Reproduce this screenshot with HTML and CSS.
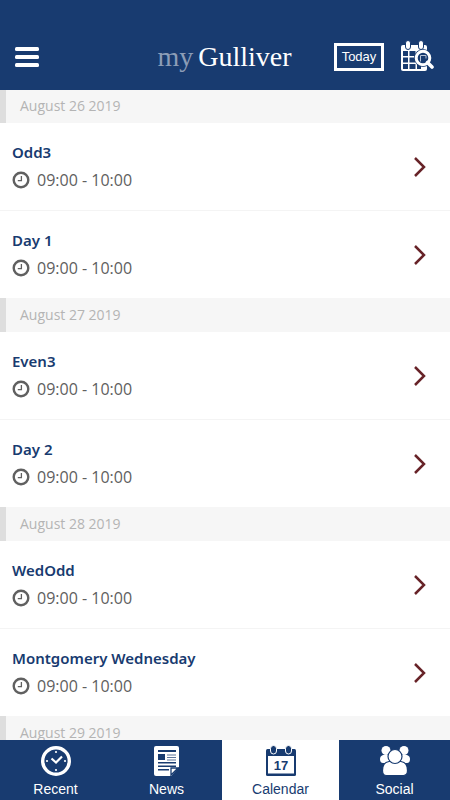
FILE: index.html
```html
<!DOCTYPE html>
<html lang="en">
<head>
<meta charset="utf-8">
<meta name="viewport" content="width=device-width, initial-scale=1">
<title>myGulliver</title>
<link rel="stylesheet" href="styles.css">
</head>
<body>
<svg class="sprite" aria-hidden="true">
  <symbol id="clock" viewBox="0 0 18 18">
    <circle cx="9" cy="9" r="7.3" fill="none" stroke="currentColor" stroke-width="2.4"/>
    <path d="M9.4 5v4.700H5.800" fill="none" stroke="currentColor" stroke-width="1.300"/>
  </symbol>
  <symbol id="chevron" viewBox="0 0 14 22">
    <path d="M2 3l9 9-9 9" fill="none" stroke="currentColor" stroke-width="2.500"/>
  </symbol>
</svg>
<div class="app">
  <header class="topbar">
    <button class="icon-button" aria-label="Menu">
      <svg width="24" height="22" viewBox="0 0 24 22" fill="#fff"><rect y="1" width="24" height="4" rx="1.5"/><rect y="9" width="24" height="4" rx="1.5"/><rect y="17" width="24" height="4" rx="1.5"/></svg>
    </button>
    <h1 class="logo"><span class="logo-my">my</span><span>Gulliver</span></h1>
    <div class="actions">
      <button class="today">Today</button>
      <button class="icon-button" aria-label="Search calendar">
        <svg width="34" height="34" viewBox="0 0 34 34">
          <path d="M1 7Q1 5 3 5H25Q27 5 27 7V29Q27 31 25 31H3Q1 31 1 29Z" fill="#fff"/>
          <g fill="#183b70"><path d="M3 11h5v5H3zM9.500 11h6v5h-6zM17 11h8v5h-8zM3 17.500h5v5H3zM9.500 17.500h6v5h-6zM3 24h5v5H3zM9.500 24h6v5h-6zM17 24h4v5h-4z"/></g>
          <g fill="#fff" stroke="#183b70"><rect x="5.500" y=".5" width="5" height="9" rx="2.500"/><rect x="18.500" y=".5" width="5" height="9" rx="2.500"/></g>
          <circle cx="23" cy="18" r="9" fill="#183b70"/>
          <circle cx="23" cy="18" r="6.800" fill="#183b70" stroke="#fff" stroke-width="3"/>
          <path d="M20.500 21.500v-6h5.500v3" fill="none" stroke="#b8c4d6"/>
          <path d="M27.500 22.500l4.500 4.500" stroke="#fff" stroke-width="3.600" stroke-linecap="round"/>
        </svg>
      </button>
    </div>
  </header>

  <main class="agenda">
    <section>
      <h2 class="date">August 26 2019</h2>
      <a class="event" href="#"><span class="details"><strong>Odd3</strong><span class="time"><svg><use href="#clock"/></svg>09:00 - 10:00</span></span><svg class="chevron"><use href="#chevron"/></svg></a>
      <a class="event" href="#"><span class="details"><strong>Day 1</strong><span class="time"><svg><use href="#clock"/></svg>09:00 - 10:00</span></span><svg class="chevron"><use href="#chevron"/></svg></a>
    </section>
    <section>
      <h2 class="date">August 27 2019</h2>
      <a class="event" href="#"><span class="details"><strong>Even3</strong><span class="time"><svg><use href="#clock"/></svg>09:00 - 10:00</span></span><svg class="chevron"><use href="#chevron"/></svg></a>
      <a class="event" href="#"><span class="details"><strong>Day 2</strong><span class="time"><svg><use href="#clock"/></svg>09:00 - 10:00</span></span><svg class="chevron"><use href="#chevron"/></svg></a>
    </section>
    <section>
      <h2 class="date">August 28 2019</h2>
      <a class="event" href="#"><span class="details"><strong>WedOdd</strong><span class="time"><svg><use href="#clock"/></svg>09:00 - 10:00</span></span><svg class="chevron"><use href="#chevron"/></svg></a>
      <a class="event" href="#"><span class="details"><strong>Montgomery Wednesday</strong><span class="time"><svg><use href="#clock"/></svg>09:00 - 10:00</span></span><svg class="chevron"><use href="#chevron"/></svg></a>
    </section>
    <section>
      <h2 class="date">August 29 2019</h2>
    </section>
  </main>

  <nav class="tabs">
    <a class="tab" href="#">
      <svg width="32" height="32" viewBox="0 0 32 32"><circle cx="16" cy="16" r="13.300" fill="none" stroke="#fff" stroke-width="3.400"/><path d="M11.500 13.500l4.500 4 6-6" fill="none" stroke="#fff" stroke-width="2.200"/><g fill="#fff"><circle cx="16" cy="7" r="1.100"/><circle cx="16" cy="25" r="1.100"/><circle cx="7" cy="16" r="1.100"/><circle cx="25" cy="16" r="1.100"/></g></svg>
      <span>Recent</span>
    </a>
    <a class="tab" href="#">
      <svg width="32" height="32" viewBox="0 0 32 32"><path d="M5 1h21q2 0 2 2v19l-8 9H5q-2 0-2-2V3q0-2 2-2z" fill="#fff"/><g fill="#183b70"><path d="M7 5h18v2H7zM7 9h7v6H7zM7 17h18v1.500H7zM7 20.500h18V22H7zM7 24h11v1.500H7z"/><path d="M16 9.500h9v1h-9zM16 12h9v1h-9zM16 14.500h9v1h-9z" opacity=".7"/></g><path d="M20 30v-7h7z" fill="#fff" stroke="#183b70" stroke-width="1.300"/></svg>
      <span>News</span>
    </a>
    <a class="tab tab-active" href="#" aria-current="page">
      <svg width="32" height="32" viewBox="0 0 32 32"><rect x="1" y="4" width="30" height="27" rx="1.500" fill="#183b70"/><path d="M3 11h26v17.500H3z" fill="#fff"/><g fill="#183b70" stroke="#fff"><rect x="5.500" y=".5" width="6" height="8.500" rx="3"/><rect x="20.500" y=".5" width="6" height="8.500" rx="3"/></g><text class="day-number" x="16" y="24.500" text-anchor="middle">17</text></svg>
      <span>Calendar</span>
    </a>
    <a class="tab" href="#">
      <svg width="32" height="32" viewBox="0 0 32 32" fill="#fff"><circle cx="7" cy="5.500" r="4.500"/><circle cx="25" cy="5.500" r="4.500"/><path d="M4 10h7v8H4q-3 0-3-4 0-3 3-4zM28 10h-7v8h7q3 0 3-4 0-3-3-4z"/><g stroke="#183b70" stroke-width="1.200"><path d="M10 16.500h12q6.500 1 6.500 9 0 5-4 5h-17q-4 0-4-5 0-8 6.500-9z"/><circle cx="16" cy="11.500" r="7"/></g></svg>
      <span>Social</span>
    </a>
  </nav>
</div>
</body>
</html>
```
FILE: styles.css
```css
* {
  box-sizing: border-box;
}

body {
  margin: 0;
  background: #fff;
  color: #606060;
  font-family: "Open Sans", sans-serif;
}

a {
  color: inherit;
  text-decoration: none;
}

button {
  margin: 0;
  padding: 0;
  border: 0;
  background: none;
  color: inherit;
  font: inherit;
}

.sprite {
  display: none;
}

.app {
  display: flex;
  flex-direction: column;
  height: 100vh;
}

.topbar {
  z-index: 1;
  display: grid;
  grid-template-columns: 1fr auto 1fr;
  align-items: center;
  padding: 24px 16px 0 15px;
  height: 90px;
  background: #183b70;
  color: #fff;
}

.icon-button {
  display: flex;
}

.logo {
  display: flex;
  gap: 5px;
  margin: 0;
  font: 28px/32px "Liberation Serif", serif;
}

.logo-my {
  color: #8c9db7;
}

.actions {
  display: flex;
  align-items: center;
  justify-content: flex-end;
  gap: 16px;
}

.today {
  width: 50px;
  height: 28px;
  border: 3px solid #fff;
  font: 13px/20px "Liberation Sans", sans-serif;
}

.agenda {
  flex: 1;
  min-height: 0;
  margin-top: -1px;
  overflow-y: auto;
  scrollbar-width: none;
}

.date {
  margin: 0;
  padding: 0 14px;
  border-left: 6px solid #dedede;
  background: #f6f6f6;
  color: #b4b4b4;
  font-size: 14px;
  font-weight: 400;
  line-height: 34px;
}

.event {
  display: flex;
  align-items: center;
  justify-content: space-between;
  padding: 15px 23px 16px 12px;
}

.event + .event {
  border-top: 1px solid #f4f4f4;
}

.details {
  display: flex;
  flex-direction: column;
}

.details strong {
  color: #183b70;
  font-family: "Noto Sans", sans-serif;
  font-size: 15px;
  font-weight: 600;
  line-height: 28px;
}

.time {
  display: flex;
  align-items: center;
  gap: 7px;
  font-size: 16px;
  line-height: 28px;
}

.time svg {
  width: 18px;
  height: 18px;
}

.chevron {
  width: 14px;
  height: 22px;
  color: #672328;
}

.tabs {
  display: flex;
  height: 60px;
  background: #183b70;
  color: #fff;
  font: 14px/18px "Liberation Sans", sans-serif;
}

.tab {
  display: flex;
  flex: 111;
  flex-direction: column;
  align-items: center;
  gap: 3px;
  padding-top: 5px;
}

.tab-active {
  flex-grow: 117;
  background: #fff;
  color: #183b70;
}

.day-number {
  fill: #183b70;
  font: bold 13px "Liberation Sans", sans-serif;
}
```
